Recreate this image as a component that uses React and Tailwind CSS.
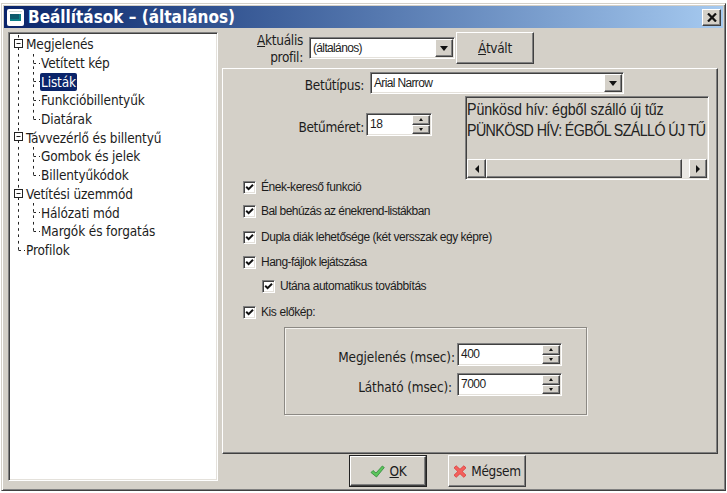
import React from "react";

const tahoma = "font-['DejaVu_Sans_Condensed','DejaVu_Sans',sans-serif] [font-stretch:condensed]";
const arial = "font-['Liberation_Sans',Arial,sans-serif]";
const raised =
  "bg-[#d4d0c8] border border-t-white border-l-white border-r-[#404040] border-b-[#404040] shadow-[inset_-1px_-1px_0_#808080]";
const sunken =
  "border border-t-[#808080] border-l-[#808080] border-r-white border-b-white shadow-[inset_1px_1px_0_#404040,inset_-1px_-1px_0_#e4e1db]";
const label = "text-right text-[13.5px] whitespace-nowrap";

const rows = [
  { text: "Megjelenés", kind: "root" },
  { text: "Vetített kép", kind: "child" },
  { text: "Listák", kind: "child", selected: true },
  { text: "Funkcióbillentyűk", kind: "child" },
  { text: "Diatárak", kind: "child", last: true },
  { text: "Távvezérlő és billentyű", kind: "root" },
  { text: "Gombok és jelek", kind: "child" },
  { text: "Billentyűkódok", kind: "child", last: true },
  { text: "Vetítési üzemmód", kind: "root" },
  { text: "Hálózati mód", kind: "child" },
  { text: "Margók és forgatás", kind: "child", last: true },
  { text: "Profilok", kind: "leaf" },
];

function Branch({ row }) {
  const child = row.kind === "child";
  const leaf = row.kind === "leaf";
  return (
    <svg
      className={child ? "w-[31px] shrink-0" : "w-[16px] shrink-0"}
      height="18.7"
      fill="none"
      stroke="#222"
      strokeWidth="1"
    >
      <path d={leaf ? "M8.5 0V10" : "M8.5 0V18.7"} strokeDasharray="2.6 3.6" />
      {child && <path d={row.last ? "M23.5 0V10" : "M23.5 0V18.7"} strokeDasharray="2.6 3.6" />}
      {child && <path d="M23.5 9.5h2.5m3 0h1" />}
      {leaf && <path d="M8.5 9.5h2.5m3 0h1" />}
      {row.kind === "root" && (
        <>
          <rect x="4.5" y="4.5" width="8" height="8" fill="white" />
          <path d="M6.5 8.5h4" />
        </>
      )}
    </svg>
  );
}

function Tree() {
  return (
    <div className={`mt-[3px] h-[449px] w-[210px] bg-white pt-[2px] pl-px ${sunken}`}>
      {rows.map((row) => (
        <div key={row.text} className="flex h-[18.7px] items-center">
          <Branch row={row} />
          <span
            className={`-ml-px rounded-[2px] px-px text-[13.5px] leading-[18px] tracking-[-0.13px] whitespace-nowrap ${
              row.selected ? "bg-[#0a246a] text-white" : "text-[#1c1c1c]"
            }`}
          >
            {row.text}
          </span>
        </div>
      ))}
    </div>
  );
}

function DropDown({ text, className }) {
  return (
    <div className={`flex bg-white p-px ${sunken} ${className}`}>
      <span className={`grow pt-px pl-[2px] text-[12px] tracking-[-0.65px] leading-[16px] ${arial}`}>{text}</span>
      <span className={`flex w-[18px] items-center justify-center ${raised}`}>
        <svg width="8" height="5" fill="#111">
          <path d="M0 0h8L4 5z" />
        </svg>
      </span>
    </div>
  );
}

function Spinner({ value, className }) {
  return (
    <div className={`flex h-[23px] bg-white p-px ${sunken} ${className}`}>
      <span className={`grow pl-[2px] text-[12px] leading-[18px] tracking-[-0.5px] ${arial}`}>{value}</span>
      <span className="flex w-[18px] flex-col">
        {["M0 3h4L2 0z", "M0 0h4L2 3z"].map((d) => (
          <span key={d} className={`flex h-[10px] items-center justify-center ${raised}`}>
            <svg width="4" height="3" fill="#111">
              <path d={d} />
            </svg>
          </span>
        ))}
      </span>
    </div>
  );
}

function Check({ text, className, track }) {
  return (
    <div className={`flex h-[13px] items-center ${className}`}>
      <span className={`flex size-[13px] items-center justify-center bg-white ${sunken}`}>
        <svg width="9" height="9" fill="none" stroke="#111" strokeWidth="2">
          <path d="M1.2 3.8 3.6 6.2 8 1.8" />
        </svg>
      </span>
      <span className={`ml-[5px] text-[12px] leading-[13px] whitespace-nowrap text-[#1c1c1c] ${arial} ${track}`}>
        {text}
      </span>
    </div>
  );
}

function Preview() {
  return (
    <div className={`mt-[3px] ml-[33px] flex h-[84px] w-[244px] flex-col overflow-hidden p-px ${sunken}`}>
      <div
        className={`w-[268px] grow origin-left scale-x-[0.89] pt-[2px] text-[16px] leading-[20.5px] whitespace-nowrap text-[#222] ${arial}`}
      >
        <p className="tracking-[-0.1px]">Pünkösd hív: égből szálló új tűz</p>
        <p className="tracking-[-0.66px]">PÜNKÖSD HÍV: ÉGBŐL SZÁLLÓ ÚJ TŰ</p>
      </div>
      <div className="flex h-[19px] bg-[#eae8e4]">
        <span className={`flex w-[19px] items-center justify-center ${raised}`}>
          <svg width="4" height="8" fill="#111"><path d="M4 0v8L0 4z" /></svg>
        </span>
        <span className={`w-[196px] ${raised}`} />
        <span className="grow" />
        <span className={`flex w-[18px] items-center justify-center ${raised}`}>
          <svg width="4" height="8" fill="#111"><path d="M0 0v8L4 4z" /></svg>
        </span>
      </div>
    </div>
  );
}

export default function App() {
  return (
    <div className={`h-[493px] w-[727px] overflow-hidden bg-white pt-[3px] pl-px text-[#1c1c1c] ${tahoma}`}>
      <div className="flex h-[488px] w-[725px] flex-col border border-t-[#d4d0c8] border-l-[#d4d0c8] border-r-[#404040] border-b-[#404040] bg-[#d4d0c8] p-[2px] shadow-[inset_1px_1px_0_white,inset_-1px_-1px_0_#808080]">
        <header className="mb-px flex h-[22px] shrink-0 items-center bg-linear-to-r from-[#0a246a] to-[#a6caf0] pr-[2px] pl-[3px]">
          <svg width="17" height="17">
            <rect width="17" height="17" rx="2" fill="#fff" />
            <path d="M2 2.5h13" stroke="#d5dcd8" />
            <rect x="3" y="5" width="11" height="7" fill="#0a7f86" />
            <rect x="3" y="5" width="9" height="5" fill="#0c5a6c" />
          </svg>
          <h1 className="ml-[4px] grow text-[17px] leading-[22px] font-bold whitespace-nowrap text-white">
            Beállítások – (általános)
          </h1>
          <button className={`flex h-[17px] w-[19px] items-center justify-center ${raised}`}>
            <svg width="10" height="9" stroke="#111" strokeWidth="2.2"><path d="M1 .5 9 8.5M9 .5 1 8.5" /></svg>
          </button>
        </header>

        <div className="flex pl-[4px]">
          <Tree />
          <div className="ml-[4px] w-[496px]">
            <div className="flex h-[39px] pt-[3px]">
              <div className={`w-[81px] leading-[16.5px] tracking-[-0.3px] ${label}`}>
                <u>A</u>ktuális
                <br />
                profil:
              </div>
              <DropDown text="(általános)" className="mt-[5px] ml-[6px] h-[22px] w-[146px]" />
              <button className={`ml-px h-[32px] w-[78px] text-[13.5px] tracking-[-0.3px] ${raised}`}>
                <u>Á</u>tvált
              </button>
            </div>

            <main className={`h-[386px] w-[496px] ${raised}`}>
              <div className="flex h-[24px] pt-[3px]">
                <span className={`w-[141px] leading-[27px] tracking-[-0.3px] ${label}`}>Betűtípus:</span>
                <DropDown text="Arial Narrow" className="ml-[6px] h-[22px] w-[254px]" />
              </div>
              <div className="flex h-[87px]">
                <span className={`w-[141px] pt-[23px] leading-[23px] tracking-[-0.3px] ${label}`}>Betűméret:</span>
                <Spinner value="18" className="mt-[20px] ml-[2px] w-[66px]" />
                <Preview />
              </div>
              <Check text="Ének-kereső funkció" className="mt-[1px] ml-[20px]" track="tracking-[-0.45px]" />
              <Check text="Bal behúzás az énekrend-listákban" className="mt-[11px] ml-[20px]" track="tracking-[-0.54px]" />
              <Check text="Dupla diák lehetősége (két versszak egy képre)" className="mt-[13px] ml-[20px]" track="tracking-[-0.48px]" />
              <Check text="Hang-fájlok lejátszása" className="mt-[12px] ml-[20px]" track="tracking-[-0.53px]" />
              <Check text="Utána automatikus továbbítás" className="mt-[11px] ml-[39px]" track="tracking-[-0.45px]" />
              <Check text="Kis előkép:" className="mt-[13px] ml-[20px]" track="tracking-[-0.4px]" />
              <section className="mt-[8px] ml-[61px] h-[88px] w-[303px] border border-[#8c8984] pt-[15px] shadow-[inset_1px_1px_0_#f4f2ee,1px_1px_0_#f4f2ee]">
                <div className="flex">
                  <span className={`w-[170px] pt-[2px] leading-[24px] tracking-[-0.1px] ${label}`}>Megjelenés (msec):</span>
                  <Spinner value="400" className="ml-[2px] w-[105px]" />
                </div>
                <div className="mt-[4px] flex">
                  <span className={`w-[167px] pt-[2px] leading-[24px] tracking-[-0.15px] ${label}`}>Látható (msec):</span>
                  <Spinner value="7000" className="ml-[5px] w-[105px]" />
                </div>
              </section>
            </main>

            <footer className="mt-px ml-[127px] flex gap-[21px]">
              <button className="h-[32px] w-[78px] border border-[#222]">
                <span className={`flex h-full w-full items-center justify-center gap-[5px] text-[13.5px] tracking-[-0.3px] ${raised}`}>
                  <svg width="15" height="13" fill="#5cc45c" stroke="#2f8a38" strokeWidth=".8">
                    <path d="M1 7.5 3 5.5 6 8 12.3 1 14.3 2.5 6.5 12z" />
                  </svg>
                  <span><u>O</u>K</span>
                </span>
              </button>
              <button className={`flex h-[32px] w-[78px] items-center justify-center gap-[4px] text-[13.5px] tracking-[-0.3px] ${raised}`}>
                <svg width="14" height="13" fill="#f4605c" stroke="#d93a38" strokeWidth=".8">
                  <path d="M3.2.8 7 4.3 10.8.8 13 2.8 9.2 6.5 13 10.2 10.8 12.3 7 8.7 3.2 12.3 1 10.2 4.8 6.5 1 2.8z" />
                </svg>
                Mégsem
              </button>
            </footer>
          </div>
        </div>
      </div>
    </div>
  );
}
